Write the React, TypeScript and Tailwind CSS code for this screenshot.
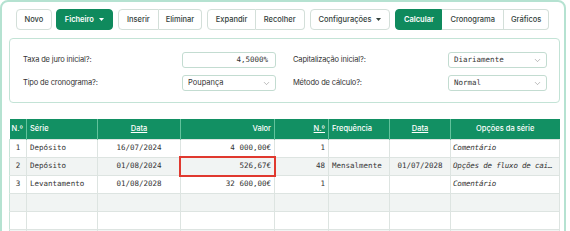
import { ChevronDown } from 'lucide-react';

const sans = 'font-["Inter","Noto_Sans",sans-serif]';
const mono = 'font-["DejaVu_Sans_Mono","Liberation_Mono",monospace]';

function Caret() {
    return (
        <svg width="5" height="3" viewBox="0 0 5 3" className="ml-[5px]">
            <path d="M0 0h5L2.5 3z" fill="currentColor" />
        </svg>
    );
}

function Btn({ label, green, caret, className = '' }: { label: string; green?: boolean; caret?: boolean; className?: string }) {
    return (
        <button
            className={`h-[21px] text-[7.5px] font-medium flex items-center border ${
                green ? 'bg-[#0f8a5d] border-[#0f8a5d] text-white' : 'bg-white border-[#d3dfd9] text-[#33413b]'
            } ${className}`}
        >
            {label}
            {caret && <Caret />}
        </button>
    );
}

const rows = [
    { n: '1', serie: 'Depósito', data: '16/07/2024', valor: '4 000,00€', num: '1', freq: '', data2: '', opt: 'Comentário' },
    { n: '2', serie: 'Depósito', data: '01/08/2024', valor: '526,67€', num: '48', freq: 'Mensalmente', data2: '01/07/2028', opt: 'Opções de fluxo de cai…' },
    { n: '3', serie: 'Levantamento', data: '01/08/2028', valor: '32 600,00€', num: '1', freq: '', data2: '', opt: 'Comentário' },
    null,
    null,
    null,
];

function Select({ value, monoText = true }: { value: string; monoText?: boolean }) {
    return (
        <div className={`${monoText ? mono : sans} h-[16px] border border-[#c3dcd1] rounded-[3px] flex items-center justify-between pl-[5px] pr-[4px] text-[7.5px]`}>
            <span>{value}</span>
            <ChevronDown size={9} strokeWidth={1.5} className="text-[#8a8a8a]" />
        </div>
    );
}

export default function App() {
    return (
        <div className={`${sans} w-[570px] h-[231px] overflow-hidden bg-white`}>
            <div className="w-[566px] h-[260px] border-2 border-[#b5e2d1] rounded-[8px] px-[7px] pt-[7px]">
                {/* Toolbar */}
                <div className="flex items-center gap-[5px] pl-[7px]">
                    <Btn label="Novo" className="rounded-[4px] px-[7.5px] mr-[-1px]" />
                    <Btn label="Ficheiro" green caret className="rounded-[4px] px-[8px] font-semibold" />
                    <div className="flex">
                        <Btn label="Inserir" className="rounded-l-[4px] px-[8px]" />
                        <Btn label="Eliminar" className="rounded-r-[4px] border-l-0 px-[7px]" />
                    </div>
                    <div className="flex">
                        <Btn label="Expandir" className="rounded-l-[4px] px-[7.5px]" />
                        <Btn label="Recolher" className="rounded-r-[4px] border-l-0 px-[8px]" />
                    </div>
                    <Btn label="Configurações" caret className="rounded-[4px] px-[8px]" />
                    <div className="flex">
                        <Btn label="Calcular" green className="rounded-l-[4px] px-[7.5px] font-semibold" />
                        <Btn label="Cronograma" className="border-l-0 px-[8px]" />
                        <Btn label="Gráficos" className="rounded-r-[4px] border-l-0 px-[7px]" />
                    </div>
                </div>

                {/* Settings */}
                <div className="mt-[8px] w-[551px] border border-[#c3e3d6] rounded-[4px] h-[65px] pl-[13px] pr-[12px] pt-[13px] grid grid-cols-[253px_1fr] content-start gap-x-[17px] gap-y-[7px] text-[7.5px] tracking-[-0.15px] text-[#333]">
                    <div className="flex items-center justify-between">
                        <span>Taxa de juro inicial?:</span>
                        <div className={`${mono} tracking-normal w-[94px] h-[16px] border border-[#c3dcd1] rounded-[3px] text-right pr-[7px] leading-[14px]`}>4,5000%</div>
                    </div>
                    <div className="flex items-center justify-between">
                        <span>Capitalização inicial?:</span>
                        <div className="w-[99px] tracking-normal">
                            <Select value="Diariamente" />
                        </div>
                    </div>
                    <div className="flex items-center justify-between">
                        <span>Tipo de cronograma?:</span>
                        <div className="w-[94px] tracking-normal">
                            <Select value="Poupança" monoText={false} />
                        </div>
                    </div>
                    <div className="flex items-center justify-between">
                        <span>Método de cálculo?:</span>
                        <div className="w-[99px] tracking-normal">
                            <Select value="Normal" />
                        </div>
                    </div>
                </div>

                {/* Table */}
                <table className={`mt-[16px] w-[550px] table-fixed border-collapse ${mono} text-[7.5px] text-[#333]`}>
                    <colgroup>
                        <col className="w-[17px]" />
                        <col className="w-[71px]" />
                        <col className="w-[83px]" />
                        <col className="w-[94px]" />
                        <col className="w-[54px]" />
                        <col className="w-[61px]" />
                        <col className="w-[61px]" />
                        <col className="w-[109px]" />
                    </colgroup>
                    <thead>
                        <tr className={`${sans} bg-[#129063] text-white text-[7.5px] h-[20px]`}>
                            <th className="border-r border-[#62c29c] text-left pl-[2px] font-medium">N.º</th>
                            <th className="border-r border-[#62c29c] text-left pl-[3px] font-medium">Série</th>
                            <th className="border-r border-[#62c29c] text-center font-medium underline">Data</th>
                            <th className="border-r border-[#62c29c] text-right pr-[3px] font-medium">Valor</th>
                            <th className="border-r border-[#62c29c] text-right pr-[3px] font-medium underline">N.º</th>
                            <th className="border-r border-[#62c29c] text-left pl-[3px] font-medium">Frequência</th>
                            <th className="border-r border-[#62c29c] text-center font-medium underline">Data</th>
                            <th className="text-center font-medium">Opções da série</th>
                        </tr>
                    </thead>
                    <tbody>
                        {rows.map((r, i) => (
                            <tr key={i} className={`h-[18px] ${i % 2 === 1 ? 'bg-[#f1f4f3]' : 'bg-white'}`}>
                                <td className="border border-[#dde4e1] border-l-[#c9e4d9] text-center">{r?.n}</td>
                                <td className="border border-[#dde4e1] pl-[3px] whitespace-nowrap overflow-hidden">{r?.serie}</td>
                                <td className="border border-[#dde4e1] text-center">{r?.data}</td>
                                <td className="relative border border-[#dde4e1] text-right pr-[3px]">
                                    {r?.valor}
                                    {i === 1 && <div className="absolute -inset-[2px] border-2 border-[#e0392f]" />}
                                </td>
                                <td className="border border-[#dde4e1] text-right pr-[3px]">{r?.num}</td>
                                <td className="border border-[#dde4e1] pl-[3px] whitespace-nowrap">{r?.freq}</td>
                                <td className="border border-[#dde4e1] text-center">{r?.data2}</td>
                                <td className="border border-[#dde4e1] pl-[2px] italic whitespace-nowrap overflow-hidden tracking-[-0.2px]">{r?.opt}</td>
                            </tr>
                        ))}
                    </tbody>
                </table>
            </div>
        </div>
    );
}
